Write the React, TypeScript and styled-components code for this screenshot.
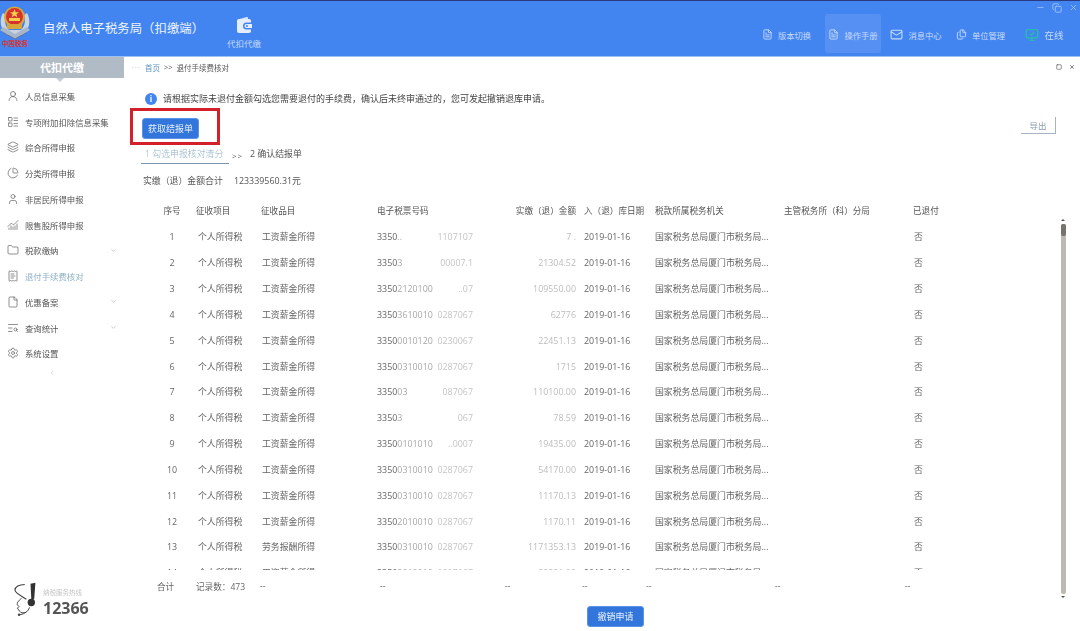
import React from 'react';
import styled, { createGlobalStyle } from 'styled-components';
import {
  ChartNoAxesCombined,
  ChartPie,
  ChevronDown,
  ChevronLeft,
  Copy,
  File,
  FileText,
  Files,
  Folder,
  Layers,
  LayoutList,
  Mail,
  Minus,
  MonitorCheck,
  ReceiptText,
  Settings,
  Square,
  TextSearch,
  User,
  UserRound,
  X,
} from 'lucide-react';

const GlobalStyles = createGlobalStyle`
html, body {
  margin: 0;
  padding: 0;
  background: #fff;
}

body {
  font-family: 'Open Sans', 'Noto Sans CJK SC', sans-serif;
  color: #555;
}

* {
  box-sizing: border-box;
}
`;

const Page = styled.div`
  width: 1080px;
  height: 631px;
  display: flex;
  flex-direction: column;
  overflow: hidden;
  filter: blur(0.35px);
`;

const Header = styled.header`
  flex: none;
  height: 57px;
  display: flex;
  background: #4285f0;
  border-top: 1px solid #2b3a80;
  border-bottom: 1px solid #9dc0f5;
  color: #fff;
`;

const Brand = styled.div`
  width: 214px;
  display: flex;
  align-items: flex-start;
  gap: 13px;
`;

const EmblemBox = styled.div`
  width: 30px;
  display: flex;
  flex-direction: column;
  align-items: center;
  padding-top: 5px;
`;

const EmblemCaption = styled.span`
  font-size: 6.5px;
  font-weight: 700;
  line-height: 8px;
  color: #d8352f;
  white-space: nowrap;
`;

const BrandTitle = styled.h1`
  margin: 19px 0 0;
  font-size: 12.4px;
  line-height: 18px;
  font-weight: 400;
  white-space: nowrap;
  color: #eef4ff;
`;

const ModuleTab = styled.div`
  width: 60px;
  display: flex;
  flex-direction: column;
  align-items: center;
  padding-top: 15px;
  gap: 5px;
  color: #c4d9fb;
  font-size: 8.5px;
  line-height: 12px;
`;

const HeaderRight = styled.div`
  flex: 1;
  display: flex;
  flex-direction: column;
`;

const WindowControls = styled.div`
  height: 13px;
  display: flex;
  justify-content: flex-end;
  align-items: center;
  gap: 7px;
  padding: 0 2px 0 0;
  color: #a9c8f8;
`;

const Tools = styled.div`
  flex: 1;
  display: flex;
  justify-content: flex-end;
  align-items: stretch;
  padding: 0 1px 3px 0;
`;

const Tool = styled.div<{ $active?: boolean; $width: number }>`
  width: ${(p) => p.$width}px;
  display: flex;
  align-items: center;
  justify-content: center;
  gap: 5px;
  padding-top: 2px;
  border-radius: 3px;
  font-size: 8.3px;
  color: #c8dafb;
  background: ${(p) => (p.$active ? '#5590f2' : 'transparent')};
`;

const OnlineTool = styled(Tool)`
  font-size: 9.5px;
  gap: 5px;
  svg {
    color: #27c4a0;
  }
`;

const Body = styled.div`
  flex: 1;
  min-height: 0;
  display: flex;
`;

const Sidebar = styled.aside`
  flex: none;
  width: 124px;
  display: flex;
  flex-direction: column;
`;

const SideTitle = styled.div`
  position: relative;
  flex: none;
  height: 21px;
  margin-bottom: 5px;
  background: #b0bbc5;
  color: #fff;
  font-size: 11px;
  font-weight: 700;
  line-height: 21px;
  text-align: center;

  &::after {
    content: '';
    position: absolute;
    left: 56px;
    top: 21px;
    border: 4px solid transparent;
    border-top-color: #c3ccd4;
    border-bottom-width: 0;
  }
`;

const SideItem = styled.div<{ $active?: boolean }>`
  height: 25.75px;
  flex: none;
  display: flex;
  align-items: center;
  padding: 0 7px;
  gap: 6px;
  font-size: 8.4px;
  white-space: nowrap;
  color: ${(p) => (p.$active ? '#8db0c6' : '#555')};

  svg:first-child {
    flex: none;
    color: #555;
  }
`;

const SideChevron = styled(ChevronDown)`
  margin-left: auto;
  color: #aaa;
`;

const CollapseRow = styled.div`
  display: flex;
  justify-content: center;
  padding: 4px 20px 0 0;
  color: #b5b5b5;
`;

const HotlineLogo = styled.div`
  margin-top: auto;
  display: flex;
  align-items: flex-end;
  gap: 5px;
  padding: 0 0 13px 14px;
`;

const HotlineText = styled.div`
  display: flex;
  flex-direction: column;
`;

const HotlineCaption = styled.span`
  margin-bottom: 2px;
  font-size: 6.5px;
  line-height: 8px;
  color: #c4c4c4;
  white-space: nowrap;
`;

const HotlineNumber = styled.span`
  font-size: 16px;
  line-height: 19px;
  font-weight: 700;
  color: #555;
`;

const Main = styled.main`
  flex: 1;
  min-width: 0;
  display: flex;
  flex-direction: column;
`;

const Crumbs = styled.div`
  flex: none;
  height: 20px;
  display: flex;
  align-items: center;
  padding: 0 5px 0 8px;
  gap: 4px;
  font-size: 7.5px;
  color: #555;
`;

const CrumbLink = styled.span`
  color: #5e96b8;
`;

const CrumbDots = styled.span`
  color: #aaa;
  letter-spacing: 1px;
`;

const CrumbActions = styled.div`
  margin-left: auto;
  display: flex;
  gap: 7px;
  color: #555;
`;

const Notice = styled.div`
  flex: none;
  height: 19px;
  margin-top: 12px;
  display: flex;
  align-items: center;
  gap: 6px;
  padding-left: 21px;
  font-size: 9px;
  color: #444;
  white-space: nowrap;
`;

const InfoDot = styled.span`
  width: 12px;
  height: 12px;
  border-radius: 50%;
  background: #4285f0;
  color: #fff;
  font-size: 8px;
  font-weight: 700;
  line-height: 12px;
  text-align: center;
`;

const ActionRow = styled.div`
  flex: none;
  height: 38px;
  display: flex;
  align-items: flex-start;
  padding: 0 24px 0 6px;
  justify-content: space-between;
`;

const HighlightBox = styled.div`
  width: 90px;
  height: 37px;
  border: 3px solid #d4202a;
  padding: 4px 0 0 9px;
`;

const PrimaryButton = styled.button`
  width: 57px;
  height: 21px;
  padding: 0;
  border: 1px solid #5b93e8;
  border-radius: 3px;
  background: #3276db;
  color: #e8f0ff;
  font-family: inherit;
  font-size: 9px;
  line-height: 19px;
`;

const GhostButton = styled.button`
  width: 35px;
  height: 17px;
  margin-top: 9px;
  padding: 0;
  border: 0;
  border-right: 1px solid #a4b4c4;
  border-bottom: 1px solid #a4b4c4;
  background: transparent;
  color: #8d9cab;
  font-family: inherit;
  font-size: 8.5px;
`;

const Steps = styled.div`
  flex: none;
  height: 18px;
  display: flex;
  align-items: flex-start;
  padding-left: 17px;
  font-size: 8.9px;
  line-height: 16px;
  white-space: nowrap;
  color: #555;
`;

const StepActive = styled.div`
  width: 88px;
  height: 18px;
  padding-left: 4px;
  border-bottom: 1px solid #7d93a8;
  color: #8db0c6;
  font-weight: 300;
`;

const StepArrows = styled.span`
  width: 21px;
  padding: 2px 0 0 3px;
  font-size: 8px;
  letter-spacing: 1px;
  color: #666;
`;

const Total = styled.div`
  flex: none;
  height: 16px;
  margin-top: 8px;
  padding-left: 19px;
  display: flex;
  gap: 11px;
  align-items: center;
  font-size: 8.9px;
  color: #555;
  white-space: nowrap;
`;

const TableArea = styled.div`
  flex: none;
  height: 400px;
  margin-top: 9px;
  display: flex;
`;

const TableColumn = styled.div`
  width: 937px;
  display: flex;
  flex-direction: column;
`;

const TableClip = styled.div`
  height: 373px;
  overflow: hidden;
  padding-left: 36px;
`;

const gridColumns = '36px 65px 116px 103px 96px 79px 129px 129px 40px';

const HeadRow = styled.div`
  height: 27px;
  display: grid;
  grid-template-columns: ${gridColumns};
  align-items: center;
  font-size: 8.6px;
  color: #555;
  white-space: nowrap;
`;

const Row = styled(HeadRow)`
  height: 25.83px;
  color: #666;
  font-size: 8.9px;
`;

const Cell = styled.div<{ $align?: 'center' | 'right'; $pad?: string }>`
  text-align: ${(p) => p.$align ?? 'left'};
  padding: ${(p) => p.$pad ?? '0'};
`;

const Ticket = styled.div`
  width: 96px;
  display: flex;
  justify-content: space-between;
  overflow: hidden;
`;

const TicketMid = styled.span`
  color: #a8a8a8;
`;

const Faded = styled.span`
  color: #c4c4c4;
`;

const Amount = styled.span`
  color: #bcbcbc;
`;

const Summary = styled.div`
  height: 27px;
  padding-top: 5px;
  padding-left: 33px;
  display: grid;
  grid-template-columns: 39px 64px 120px 125px 77px 64px 129px 130px 40px;
  align-items: center;
  font-size: 8.6px;
  color: #666;
  white-space: nowrap;
`;

const ScrollRail = styled.div`
  position: relative;
  width: 5px;
  margin: 27px 0 3px 0;
  border-radius: 2px;
  background: #bdb9b0;

  &::before,
  &::after {
    content: '';
    position: absolute;
    left: 0;
    border: 2.5px solid transparent;
  }

  &::before {
    top: -5px;
    border-bottom-color: #555;
    border-top-width: 0;
  }

  &::after {
    bottom: -4px;
    border-top-color: #555;
    border-bottom-width: 0;
  }
`;

const ScrollThumb = styled.div`
  height: 12px;
  border-radius: 2px;
  background: #77746e;
`;

const BottomBar = styled.div`
  flex: none;
  margin-top: 6px;
  padding-left: 463px;
`;

const sideItems = [
  { icon: UserRound, label: '人员信息采集' },
  { icon: LayoutList, label: '专项附加扣除信息采集' },
  { icon: Layers, label: '综合所得申报' },
  { icon: ChartPie, label: '分类所得申报' },
  { icon: User, label: '非居民所得申报' },
  { icon: ChartNoAxesCombined, label: '限售股所得申报' },
  { icon: Folder, label: '税款缴纳', more: true },
  { icon: ReceiptText, label: '退付手续费核对', active: true },
  { icon: File, label: '优惠备案', more: true },
  { icon: TextSearch, label: '查询统计', more: true },
  { icon: Settings, label: '系统设置' },
];

const rows = [
  { head: '3350..', tail: '1107107', amount: '7 .' },
  { head: '33503', tail: '00007.1', amount: '21304.52' },
  { head: '33502120100', tail: '..07', amount: '109550.00' },
  { head: '33503610010', tail: '0287067', amount: '62776' },
  { head: '33500010120', tail: '0230067', amount: '22451.13' },
  { head: '33500310010', tail: '0287067', amount: '1715' },
  { head: '335003', tail: '087067', amount: '110100.00' },
  { head: '33503', tail: '067', amount: '78.59' },
  { head: '33500101010', tail: '..0007', amount: '19435.00' },
  { head: '33500310010', tail: '0287067', amount: '54170.00' },
  { head: '33500310010', tail: '0287067', amount: '11170.13' },
  { head: '33502010010', tail: '0287067', amount: '1170.11' },
  { head: '33500310010', tail: '0287067', amount: '1171353.13', labor: true },
  { head: '33502010010', tail: '0287067', amount: '22521.02' },
];

const Emblem = () => (
  <svg width="30" height="34" viewBox="0 0 30 34">
    <path d="M3 7C-1 14 0 23 7 29l16 0C30 23 31 14 27 7l-3 2c2 6 1 11-3 15H9C5 20 4 15 6 9z" fill="#c9d3e2" />
    <path d="M0 24l15 9 15-9-3-3-12 7-12-7z" fill="#a9b6ca" />
    <path d="M4 27l11 6 11-6" stroke="#5d76a0" strokeWidth="1" fill="none" />
    <circle cx="14.500" cy="11" r="10.500" fill="#d9a63a" />
    <circle cx="14.500" cy="10.500" r="8.500" fill="#d8322c" />
    <path d="M14.500 3l1.200 3.200h3.300l-2.600 2 1 3.200-2.900-2-2.900 2 1-3.200-2.600-2h3.300z" fill="#f4cf4f" />
    <rect x="9" y="12" width="11" height="3" fill="#f4cf4f" />
    <rect x="7" y="18" width="15" height="5" rx="1" fill="#d9a63a" />
  </svg>
);

const WalletMark = () => (
  <svg width="17" height="17" viewBox="0 0 17 17">
    <path d="M2 3.500 10.500 1c1-.3 1.500.3 1.500 1.200V3H2z" fill="#d6e5fd" />
    <path d="M1 5c0-1.200.8-2 2-2h10c1.200 0 2 .8 2 2v1.500h-4.500a3.500 3.500 0 0 0 0 7H15V15c0 1.200-.8 2-2 2H3c-1.200 0-2-.8-2-2z" fill="#e4eefe" />
    <path d="M10.500 8H16v4h-5.500a2 2 0 0 1 0-4z" fill="#e4eefe" />
    <circle cx="11" cy="10" r="1" fill="#4285f0" />
  </svg>
);

const HeadsetMark = () => (
  <svg width="24" height="36" viewBox="0 0 29 44" fill="none">
    <path d="M20 2l6-1-1.500 20h-3.500z" fill="#333" />
    <circle cx="21" cy="25" r="4.500" fill="#333" />
    <path d="M13 3C6 3 1 6 1 10c0 3 6 6 14 11" stroke="#444" strokeWidth="1.400" />
    <path d="M9 20c-4 3-6 6-5 8l2 2-2 2 3 4c1 2 4 2 8 1" stroke="#444" strokeWidth="1.200" />
    <path d="M19 31c-2 5-6 8-12 9" stroke="#444" strokeWidth="1.200" />
    <circle cx="6" cy="40" r="1.500" fill="#444" />
  </svg>
);

export default function App() {
  return (
    <Page>
      <GlobalStyles />
      <Header>
        <Brand>
          <EmblemBox>
            <Emblem />
            <EmblemCaption>中国税务</EmblemCaption>
          </EmblemBox>
          <BrandTitle>自然人电子税务局（扣缴端）</BrandTitle>
        </Brand>
        <ModuleTab>
          <WalletMark />
          代扣代缴
        </ModuleTab>
        <HeaderRight>
          <WindowControls>
            <Minus size={9} />
            <Copy size={10} />
            <X size={9} />
          </WindowControls>
          <Tools>
            <Tool $width={77}>
              <FileText size={11} />
              版本切换
            </Tool>
            <Tool $width={56} $active>
              <FileText size={11} />
              操作手册
            </Tool>
            <Tool $width={70}>
              <Mail size={13} />
              消息中心
            </Tool>
            <Tool $width={59}>
              <Files size={11} />
              单位管理
            </Tool>
            <OnlineTool $width={69}>
              <MonitorCheck size={14} />
              在线
            </OnlineTool>
          </Tools>
        </HeaderRight>
      </Header>
      <Body>
        <Sidebar>
          <SideTitle>代扣代缴</SideTitle>
          {sideItems.map((item) => (
            <SideItem key={item.label} $active={item.active}>
              <item.icon size={12} strokeWidth={1.3} />
              {item.label}
              {item.more ? <SideChevron size={7} /> : null}
            </SideItem>
          ))}
          <CollapseRow>
            <ChevronLeft size={6} />
          </CollapseRow>
          <HotlineLogo>
            <HeadsetMark />
            <HotlineText>
              <HotlineCaption>纳税服务热线</HotlineCaption>
              <HotlineNumber>12366</HotlineNumber>
            </HotlineText>
          </HotlineLogo>
        </Sidebar>
        <Main>
          <Crumbs>
            <CrumbDots>···</CrumbDots>
            <CrumbLink>首页</CrumbLink>
            <span>&gt;&gt;</span>
            <span>退付手续费核对</span>
            <CrumbActions>
              <Square size={6} strokeWidth={2.5} />
              <X size={6} strokeWidth={3} />
            </CrumbActions>
          </Crumbs>
          <Notice>
            <InfoDot>i</InfoDot>
            请根据实际未退付金额勾选您需要退付的手续费，确认后未终审通过的，您可发起撤销退库申请。
          </Notice>
          <ActionRow>
            <HighlightBox>
              <PrimaryButton>获取结报单</PrimaryButton>
            </HighlightBox>
            <GhostButton>导出</GhostButton>
          </ActionRow>
          <Steps>
            <StepActive>1 勾选申报核对清分</StepActive>
            <StepArrows>&gt;&gt;</StepArrows>
            <span>2 确认结报单</span>
          </Steps>
          <Total>
            <span>实缴（退）金额合计</span>
            <span>123339560.31元</span>
          </Total>
          <TableArea>
            <TableColumn>
              <TableClip>
                <HeadRow>
                  <Cell $align="center" $pad="0 12px 0 0">序号</Cell>
                  <Cell>征收项目</Cell>
                  <Cell>征收品目</Cell>
                  <Cell>电子税票号码</Cell>
                  <Cell $align="right">实缴（退）金额</Cell>
                  <Cell $pad="0 0 0 8px">入（退）库日期</Cell>
                  <Cell>税款所属税务机关</Cell>
                  <Cell>主管税务所（科）分局</Cell>
                  <Cell>已退付</Cell>
                </HeadRow>
                {rows.map((row, i) => (
                  <Row key={i}>
                    <Cell $align="center" $pad="0 12px 0 0">{i + 1}</Cell>
                    <Cell $pad="0 0 0 2px">个人所得税</Cell>
                    <Cell $pad="0 0 0 1px">{row.labor ? '劳务报酬所得' : '工资薪金所得'}</Cell>
                    <Cell>
                      <Ticket>
                        <span>
                          {row.head.slice(0, 4)}
                          <TicketMid>{row.head.slice(4)}</TicketMid>
                        </span>
                        <Faded>{row.tail}</Faded>
                      </Ticket>
                    </Cell>
                    <Cell $align="right">
                      <Amount>{row.amount}</Amount>
                    </Cell>
                    <Cell $pad="0 0 0 8px">2019-01-16</Cell>
                    <Cell>国家税务总局厦门市税务局...</Cell>
                    <Cell />
                    <Cell $pad="0 0 0 1px">否</Cell>
                  </Row>
                ))}
              </TableClip>
              <Summary>
                <span>合计</span>
                <span>记录数：473</span>
                <span>--</span>
                <span>--</span>
                <span>--</span>
                <span>--</span>
                <span>--</span>
                <span>--</span>
                <span>--</span>
              </Summary>
            </TableColumn>
            <ScrollRail>
              <ScrollThumb />
            </ScrollRail>
          </TableArea>
          <BottomBar>
            <PrimaryButton>撤销申请</PrimaryButton>
          </BottomBar>
        </Main>
      </Body>
    </Page>
  );
}
